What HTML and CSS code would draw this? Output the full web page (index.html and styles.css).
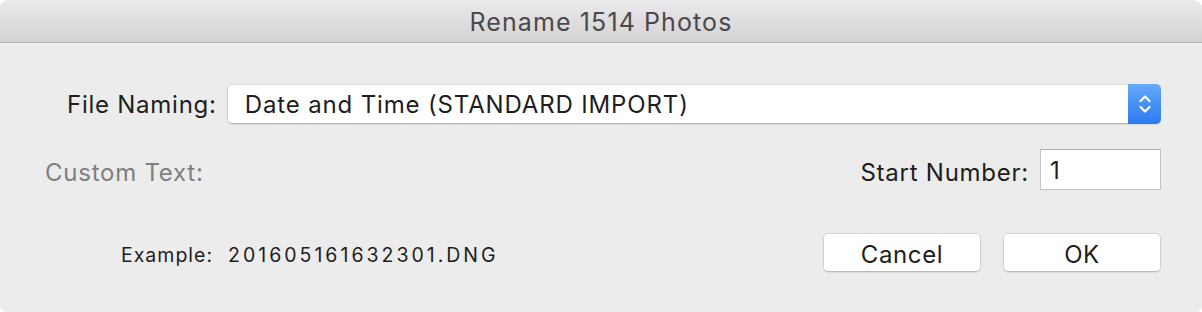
FILE: index.html
```html
<!DOCTYPE html>
<html>
<head>
<meta charset="utf-8">
<link rel="stylesheet" href="styles.css">
</head>
<body>
<div class="window">
  <div class="titlebar">Rename 1514 Photos</div>
  <div class="content">
    <div class="row row-naming">
      <span class="label">File Naming:</span>
      <div class="popup">
        <span class="popup-text">Date and Time (STANDARD IMPORT)</span>
        <span class="stepper">
          <svg width="16" height="24" viewBox="0 0 16 24">
            <path d="M3.5 9 L8 4.5 L12.5 9" fill="none" stroke="#fff" stroke-width="2.2" stroke-linecap="round" stroke-linejoin="round"/>
            <path d="M3.5 15 L8 19.5 L12.5 15" fill="none" stroke="#fff" stroke-width="2.2" stroke-linecap="round" stroke-linejoin="round"/>
          </svg>
        </span>
      </div>
    </div>
    <div class="row row-custom">
      <span class="label disabled">Custom Text:</span>
      <div class="start">
        <span class="label">Start Number:</span>
        <div class="field">1</div>
      </div>
    </div>
    <div class="row row-bottom">
      <div class="example"><span class="example-label">Example:</span><span class="example-value">201605161632301.DNG</span></div>
      <div class="buttons">
        <div class="btn">Cancel</div>
        <div class="btn">OK</div>
      </div>
    </div>
  </div>
</div>
</body>
</html>
```
FILE: styles.css
```css
html, body {
  margin: 0;
  padding: 0;
  background: #ffffff;
}
body {
  font-family: Inter, "Liberation Sans", Arial, sans-serif;
  color: #1e1e1e;
}
.window {
  width: 1202px;
  height: 312px;
  background: #ececec;
  border-radius: 9px 9px 6px 6px;
  overflow: hidden;
  box-sizing: border-box;
}
.titlebar {
  height: 42px;
  background: linear-gradient(#ebe9eb, #d4d2d4);
  border-bottom: 1px solid #b4b2b4;
  box-shadow: 0 1px 0 #f4f4f4;
  text-align: center;
  line-height: 45px;
  font-size: 25px;
  letter-spacing: 1.1px;
  color: #4a4a4a;
}
.content {
  padding: 41px 41px 0 45px;
}
.row {
  display: flex;
  align-items: center;
}
.label {
  font-size: 24px;
  letter-spacing: 0.75px;
  color: #1e1e1e;
}
.label.disabled {
  color: #7f7f7f;
}
.row-naming {
  padding-left: 22px;
  height: 40px;
}
.row-naming .label {
  margin-right: 10px;
}
.popup {
  flex: 1;
  height: 38px;
  display: flex;
  align-items: stretch;
  background: #ffffff;
  border: 1px solid #d0d0d0;
  border-top-color: #dadada;
  border-bottom-color: #b8b8b8;
  border-radius: 5px;
  box-shadow: 0 1px 1px rgba(0,0,0,0.08);
}
.popup-text {
  flex: 1;
  padding-left: 17px;
  font-size: 24px;
  letter-spacing: 0.85px;
  line-height: 40px;
  color: #1e1e1e;
}
.stepper {
  width: 33px;
  margin: -1px -1px -1px 0;
  background: linear-gradient(#66a9fa, #2b7af1);
  border-radius: 0 5px 5px 0;
  display: flex;
  align-items: center;
  justify-content: center;
}
.row-custom {
  margin-top: 25px;
  height: 41px;
  justify-content: space-between;
}
.row-custom .label {
  padding-top: 6px;
}
.start {
  display: flex;
  align-items: center;
}
.start .label {
  margin-right: 11px;
}
.field {
  width: 110px;
  height: 39px;
  background: #ffffff;
  border: 1px solid #c3c3c3;
  border-top-color: #b0b0b0;
  padding-left: 9px;
  font-size: 24px;
  line-height: 41px;
  color: #1e1e1e;
}
.row-bottom {
  margin-top: 43px;
  height: 39px;
  justify-content: space-between;
}
.example {
  margin-left: 76px;
  padding-top: 4px;
  font-size: 19.5px;
  color: #1e1e1e;
}
.example-label {
  letter-spacing: 1px;
}
.example-value {
  margin-left: 15px;
  letter-spacing: 3px;
}
.buttons {
  display: flex;
  gap: 22px;
}
.btn {
  width: 156px;
  height: 37px;
  background: #ffffff;
  border: 1px solid #d2d2d2;
  border-bottom-color: #bbbbbb;
  border-radius: 5px;
  box-shadow: 0 1px 1px rgba(0,0,0,0.08);
  text-align: center;
  line-height: 41px;
  font-size: 24px;
  letter-spacing: 0.6px;
  color: #1e1e1e;
}
```
